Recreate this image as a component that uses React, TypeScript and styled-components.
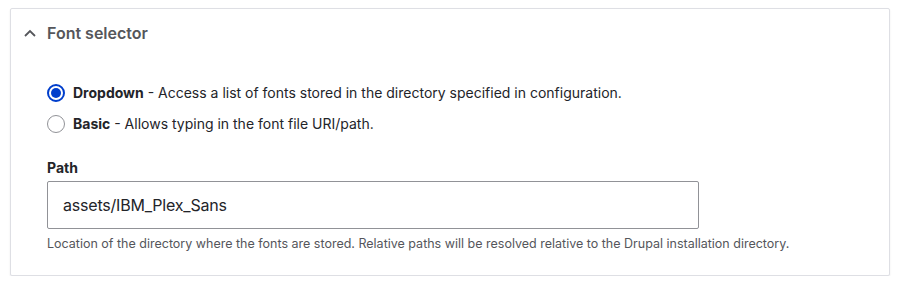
import React, { useState } from "react"
import styled, { createGlobalStyle } from "styled-components"

const GlobalStyle = createGlobalStyle`
    body {
        margin: 0;
        background: #ffffff;
        font-family: Inter, "Liberation Sans", Arial, sans-serif;
        color: #232429;
    }
`

const Details = styled.div`
    margin: 8px 10px 0;
    width: 880px;
    height: 268px;
    box-sizing: border-box;
    border: 1px solid #dedfe4;
    border-radius: 2px;
    box-shadow: 0 1px 2px rgba(0, 0, 0, 0.08);
    background: #ffffff;
`

const Summary = styled.div`
    display: flex;
    align-items: center;
    gap: 11px;
    height: 48px;
    padding-left: 13px;
    font-size: 16px;
    font-weight: 600;
    color: #55565b;
`

const Body = styled.div`
    padding: 27px 36px 0;
`

const RadioList = styled.div`
    display: flex;
    flex-direction: column;
    gap: 13px;
`

const RadioRow = styled.label`
    display: flex;
    align-items: center;
    gap: 8px;
    font-size: 14px;
    line-height: 18px;
    cursor: pointer;
`

const RadioCircle = styled.span<{ $checked: boolean }>`
    width: 18px;
    height: 18px;
    border-radius: 50%;
    box-sizing: border-box;
    border: ${(p) => (p.$checked ? "2px solid #003ecc" : "1px solid #919297")};
    display: flex;
    align-items: center;
    justify-content: center;
    &::after {
        content: "";
        display: ${(p) => (p.$checked ? "block" : "none")};
        width: 10px;
        height: 10px;
        border-radius: 50%;
        background: #003ecc;
    }
`

const Strong = styled.strong`
    font-weight: 700;
`

const Field = styled.div`
    margin-top: 26px;
`

const FieldLabel = styled.div`
    font-size: 14px;
    font-weight: 700;
    line-height: 18px;
    margin-bottom: 4px;
`

const TextInput = styled.input`
    display: block;
    width: 652px;
    height: 48px;
    box-sizing: border-box;
    border: 1px solid #919297;
    border-radius: 2px;
    padding: 0 15px;
    font-family: Inter, "Liberation Sans", Arial, sans-serif;
    font-size: 16px;
    letter-spacing: -0.2px;
    color: #232429;
    outline: none;
`

const Description = styled.div`
    margin-top: 7px;
    font-size: 12.5px;
    line-height: 16px;
    color: #55565b;
`

const Chevron = () => (
    <svg width="12" height="8" viewBox="0 0 12 8" fill="none">
        <path d="M1 7L6 2L11 7" stroke="#55565b" strokeWidth="1.8" />
    </svg>
)

const options = [
    { id: "dropdown", title: "Dropdown", text: "Access a list of fonts stored in the directory specified in configuration." },
    { id: "basic", title: "Basic", text: "Allows typing in the font file URI/path." },
]

export default function App() {
    const [selected, setSelected] = useState("dropdown")
    return (
        <>
            <GlobalStyle />
            <Details>
                <Summary>
                    <Chevron />
                    Font selector
                </Summary>
                <Body>
                    <RadioList>
                        {options.map((o) => (
                            <RadioRow key={o.id} onClick={() => setSelected(o.id)}>
                                <RadioCircle $checked={selected === o.id} />
                                <span>
                                    <Strong>{o.title}</Strong> - {o.text}
                                </span>
                            </RadioRow>
                        ))}
                    </RadioList>
                    <Field>
                        <FieldLabel>Path</FieldLabel>
                        <TextInput defaultValue="assets/IBM_Plex_Sans" />
                        <Description>
                            Location of the directory where the fonts are stored. Relative paths will be resolved relative to the Drupal installation directory.
                        </Description>
                    </Field>
                </Body>
            </Details>
        </>
    )
}
